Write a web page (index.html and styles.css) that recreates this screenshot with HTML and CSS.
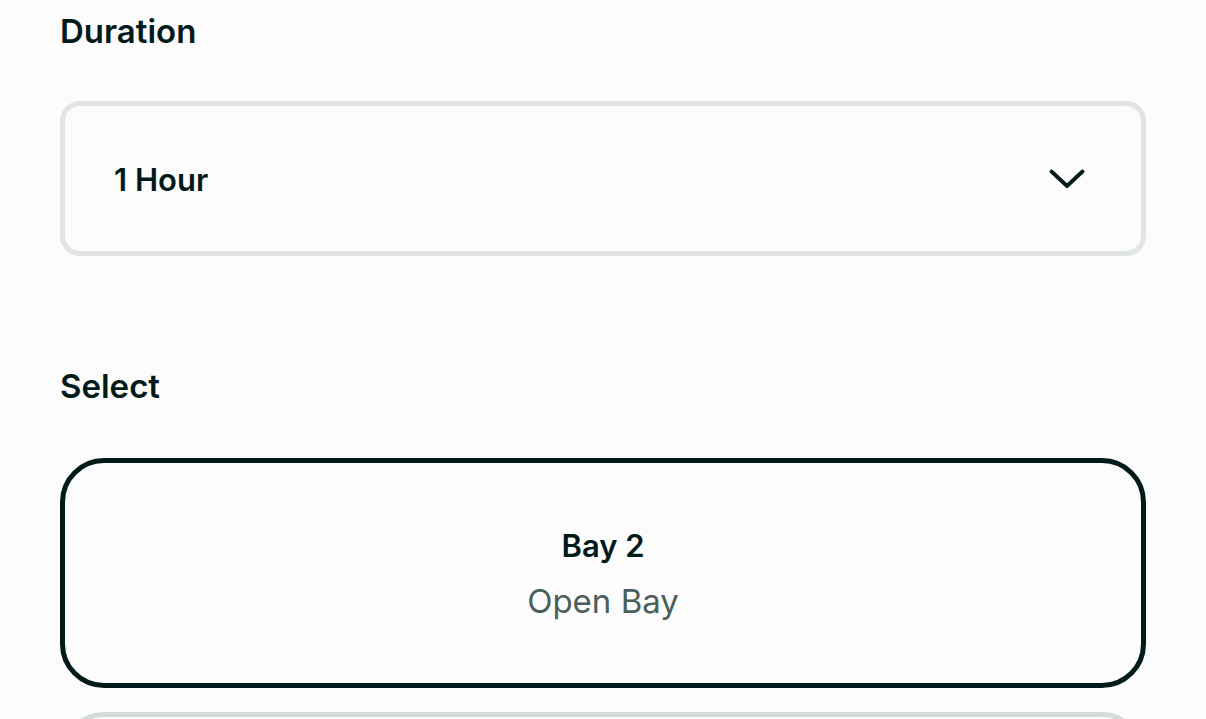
FILE: index.html
```html
<!DOCTYPE html>
<html lang="en">
<head>
<meta charset="utf-8">
<title>Booking</title>
<link rel="stylesheet" href="styles.css">
</head>
<body>
<main class="page">
  <section class="field">
    <h2 class="label">Duration</h2>
    <div class="select-box">
      <span class="select-value">1 Hour</span>
      <svg class="chevron" viewBox="0 0 36 20" width="36" height="20" aria-hidden="true">
        <path d="M2.5 2.5 L18 17 L33.5 2.5" fill="none" stroke="#031a1a" stroke-width="3.8" stroke-linecap="round" stroke-linejoin="round"/>
      </svg>
    </div>
  </section>
  <section class="field field-select">
    <h2 class="label">Select</h2>
    <div class="bay-list">
      <div class="bay bay-active">
        <div class="bay-name">Bay 2</div>
        <div class="bay-type">Open Bay</div>
      </div>
      <div class="bay"></div>
    </div>
  </section>
</main>
</body>
</html>
```
FILE: styles.css
```css
html, body {
  margin: 0;
  padding: 0;
  background: #fcfcfc;
  overflow: hidden;
}
body {
  font-family: Inter, "Noto Sans", sans-serif;
  color: #031a1a;
}
.page {
  padding: 11px 60px 0 60px;
}
.label {
  margin: 0;
  font-size: 33px;
  line-height: 40px;
  font-weight: 600;
  color: #031a1a;
}
.select-box {
  margin-top: 50px;
  box-sizing: border-box;
  height: 155px;
  border: 5px solid #e0e4e4;
  border-radius: 20px;
  display: flex;
  align-items: center;
  justify-content: space-between;
  padding: 2px 56px 0 49px;
}
.select-value {
  font-size: 31px;
  font-weight: 600;
  line-height: 38px;
}
.chevron {
  display: block;
  margin-top: -2px;
}
.field-select {
  margin-top: 110px;
}
.bay-list {
  margin-top: 52px;
  display: flex;
  flex-direction: column;
  gap: 24px;
}
.bay {
  box-sizing: border-box;
  height: 230px;
  border: 5px solid #d5dada;
  border-radius: 44px;
  display: flex;
  flex-direction: column;
  align-items: center;
  justify-content: center;
  gap: 17px;
  padding-top: 2px;
}
.bay-active {
  border-color: #031a1a;
}
.bay-name {
  font-size: 31px;
  line-height: 36px;
  font-weight: 600;
}
.bay-type {
  font-size: 33px;
  line-height: 40px;
  font-weight: 400;
  color: #4a5f5c;
}
```
